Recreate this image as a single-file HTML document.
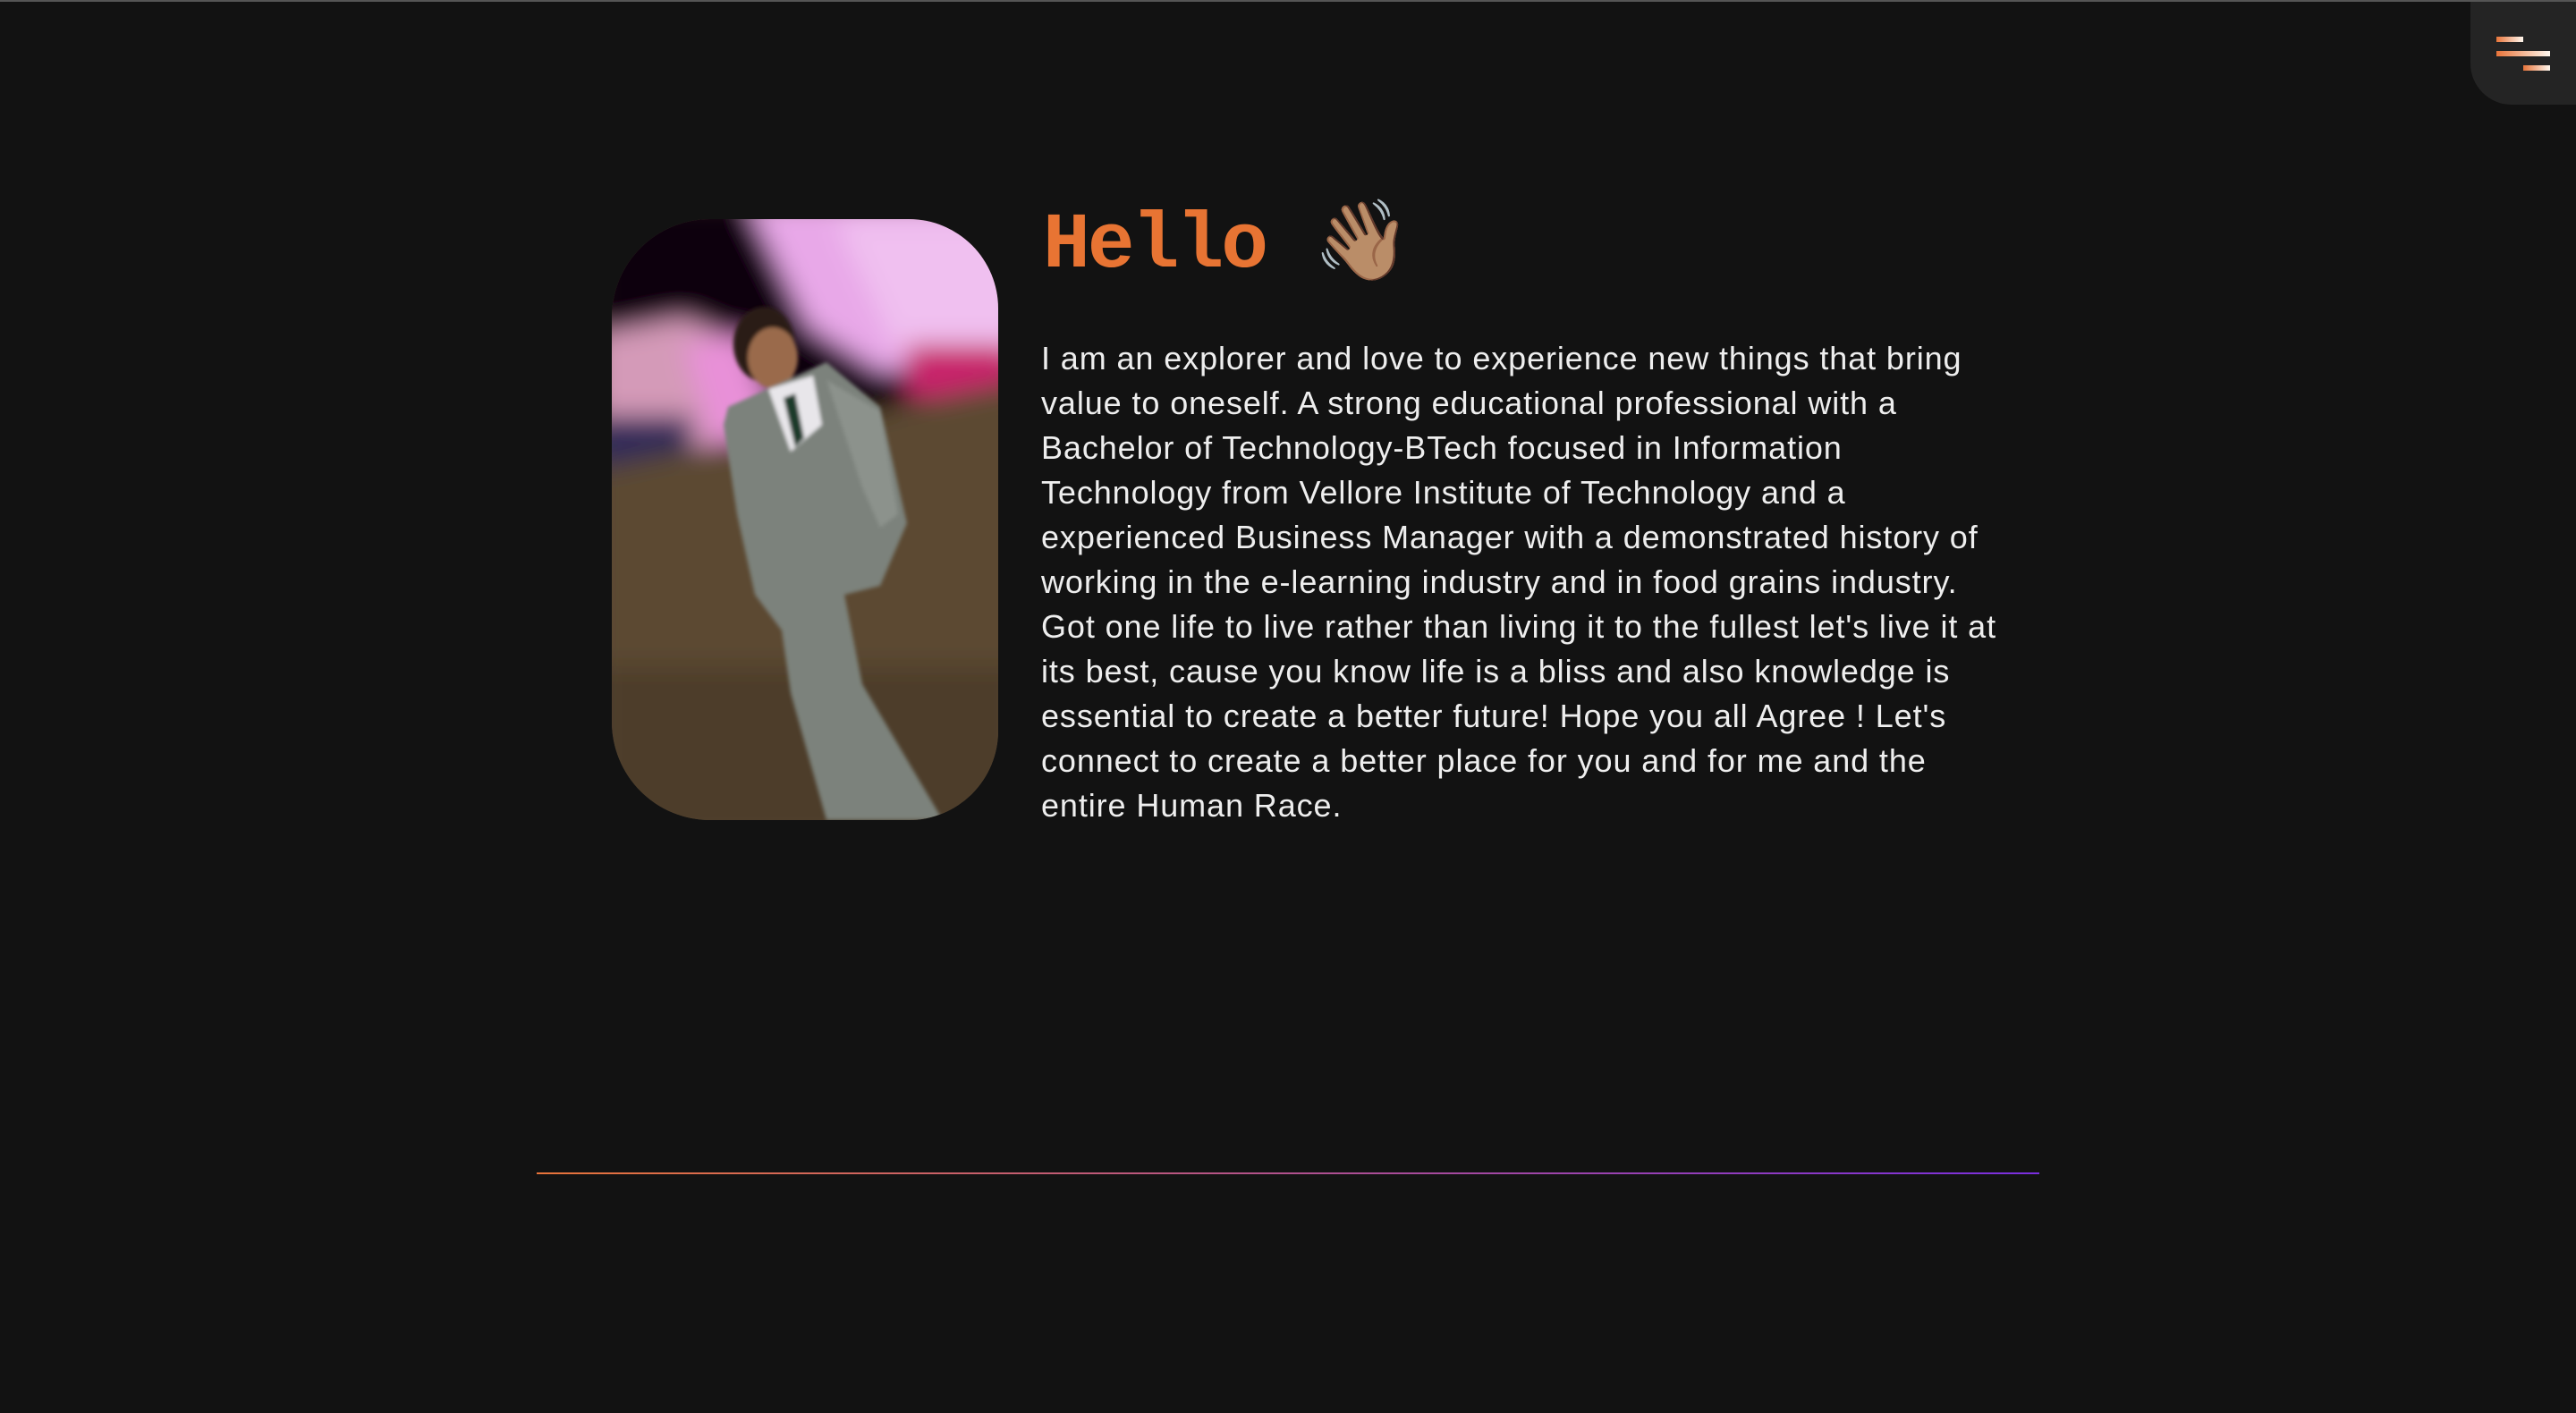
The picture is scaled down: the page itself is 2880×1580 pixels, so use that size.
<!DOCTYPE html>
<html><head><meta charset="utf-8"><style>
html,body{margin:0;padding:0;background:#121212;width:2880px;height:1580px;overflow:hidden;position:relative}
.topline{position:absolute;left:0;top:0;width:2880px;height:2px;background:#555}
.menu{position:absolute;left:2762px;top:2px;width:118px;height:115px;background:#242424;border-bottom-left-radius:46px}
.bar{position:absolute;height:6px;background:linear-gradient(90deg,#e8743a,#fff8ef)}
.photo{position:absolute;left:684px;top:245px;width:432px;height:672px;border-radius:110px 100px 100px 110px;overflow:hidden}
h1{position:absolute;left:1166px;top:206px;margin:0;font-family:"Liberation Mono",monospace;font-weight:bold;font-size:88px;line-height:140px;color:#e87433;letter-spacing:-3px;white-space:nowrap}
.wave{position:absolute;left:1468px;top:220px;font-size:88px;line-height:100px;font-family:"Noto Color Emoji",sans-serif}
.txt{position:absolute;left:1164px;top:376px;font-family:"Liberation Sans",sans-serif;font-size:36px;line-height:50px;color:#eeeeee;white-space:nowrap;letter-spacing:0.9px}
.hr{position:absolute;left:600px;top:1311px;width:1680px;height:2px;background:linear-gradient(90deg,#e8743a,#7a2ee0)}
</style></head><body>
<div class="topline"></div>
<div class="menu">
<div class="bar" style="left:29px;top:39px;width:30px"></div>
<div class="bar" style="left:29px;top:55px;width:60px"></div>
<div class="bar" style="left:59px;top:71px;width:30px"></div>
</div>
<div class="photo">
<svg width="432" height="672" viewBox="0 0 432 672">
<defs><filter id="b"><feGaussianBlur stdDeviation="14"/></filter><filter id="b2"><feGaussianBlur stdDeviation="2"/></filter></defs>
<rect width="432" height="672" fill="#5a4a34"/>
<g filter="url(#b)">
<rect x="-20" y="-20" width="480" height="300" fill="#070508"/>
<polygon points="150,-20 460,-20 460,160 300,170 220,120" fill="#e8a8e8"/>
<polygon points="250,0 460,0 460,140 320,150" fill="#f0c0f0"/>
<polygon points="-20,130 80,110 150,140 200,260 -20,290" fill="#d49ab8"/>
<polygon points="80,140 150,130 190,260 120,270" fill="#e890d8"/>
<rect x="-20" y="220" width="110" height="70" fill="#302a58"/>
<rect x="330" y="140" width="120" height="60" fill="#c8206a"/>
<polygon points="-20,280 460,180 460,700 -20,700" fill="#5c4a32"/>
<rect x="-20" y="500" width="480" height="200" fill="#4d3e2a"/>
</g>
<g filter="url(#b2)">
<ellipse cx="170" cy="140" rx="34" ry="42" fill="#2a1a14"/>
<ellipse cx="180" cy="155" rx="28" ry="34" fill="#9a6a4c"/>
<polygon points="130,210 240,160 300,210 330,340 300,410 260,420 280,520 370,672 240,672 200,530 190,460 160,420 140,330 125,230" fill="#7c827c"/>
<polygon points="175,190 225,175 235,230 200,260" fill="#e8e6ea"/>
<polygon points="192,200 205,195 215,245 205,255" fill="#1e3a2a"/>
<polygon points="240,180 300,215 320,330 300,345 280,300" fill="#8c928c"/>
</g>
</svg>
</div>
<h1>Hello</h1>
<div class="wave">👋🏽</div>
<div class="txt">I am an explorer and love to experience new things that bring<br>value to oneself. A strong educational professional with a<br>Bachelor of Technology-BTech focused in Information<br>Technology from Vellore Institute of Technology and a<br>experienced Business Manager with a demonstrated history of<br>working in the e-learning industry and in food grains industry.<br>Got one life to live rather than living it to the fullest let's live it at<br>its best, cause you know life is a bliss and also knowledge is<br>essential to create a better future! Hope you all Agree ! Let's<br>connect to create a better place for you and for me and the<br>entire Human Race.</div>
<div class="hr"></div>
</body></html>
